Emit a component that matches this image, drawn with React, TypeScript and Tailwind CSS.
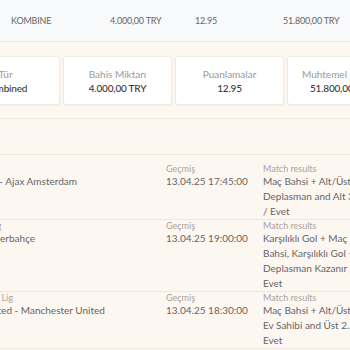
import React from "react";

const bets = [
  {
    id: 1,
    league: "Eredivisie",
    match: "VfL Wolfsburg - Ajax Amsterdam",
    date: "13.04.25 17:45:00",
    pick: "Maç Bahsi + Alt/Üst, Deplasman and Alt 3.5 / Evet",
  },
  {
    id: 2,
    league: "Türkiye Süper Lig",
    match: "Sivasspor - Fenerbahçe",
    date: "13.04.25 19:00:00",
    pick: "Karşılıklı Gol + Maç Bahsi, Karşılıklı Gol + Deplasman Kazanır / Evet",
  },
  {
    id: 3,
    league: "İngiltere Premier Lig",
    match: "Newcastle United - Manchester United",
    date: "13.04.25 18:30:00",
    pick: "Maç Bahsi + Alt/Üst, Ev Sahibi and Üst 2.5 / Evet",
  },
];

const stats = [
  { label: "Tür", value: "Combined" },
  { label: "Bahis Miktarı", value: "4.000,00 TRY" },
  { label: "Puanlamalar", value: "12.95" },
  { label: "Muhtemel Kazanç", value: "51.800,00 TRY" },
];

export default function App() {
  return (
    <div className="w-[350px] h-[350px] overflow-hidden bg-[#fdf7f1] font-['Lato',sans-serif]">
      {/* Summary row */}
      <div className="h-[42px] bg-[#f8f9fb] border-b border-[#e8e6e5] flex items-center text-[9px] text-[#666] tracking-[-0.2px]">
        <span className="ml-[11px] w-[99px]">KOMBINE</span>
        <span className="w-[85px]">4.000,00 TRY</span>
        <span className="w-[88px]">12.95</span>
        <span className="whitespace-nowrap">51.800,00 TRY</span>
      </div>

      {/* Stat cards */}
      <div className="pt-[14px] pb-[13px] border-b border-[#f3e8de]">
        <div className="-ml-[49px] flex gap-[3px]">
          {stats.map((s) => (
            <div
              key={s.label}
              className="w-[109px] h-[49px] shrink-0 bg-white border border-[#f1ebe6] rounded-[3px] shadow-[0_1px_2px_rgba(200,180,160,0.12)] flex flex-col items-center justify-center"
            >
              <span className="text-[10px] leading-[14px] text-[#9a9a9a] whitespace-nowrap">{s.label}</span>
              <span className="text-[10px] leading-[14px] font-medium text-[#3a3a3a] tracking-[-0.2px] whitespace-nowrap">{s.value}</span>
            </div>
          ))}
        </div>
      </div>

      <div className="h-[36px] border-b border-[#f1e6dc]" />

      {/* Bet rows */}
      <div className="pt-[8px]">
        {bets.map((b) => (
          <div key={b.id} className="flex border-b border-[#f1e6dc] -ml-[66px]">
            <div className="w-[232px] shrink-0">
              <p className="text-[9px] leading-[11px] text-[#aaa39d] whitespace-nowrap">{b.league}</p>
              <p className="text-[10px] leading-[15px] text-[#666] whitespace-nowrap">{b.match}</p>
            </div>
            <div className="w-[97px] shrink-0">
              <p className="text-[9px] leading-[11px] text-[#aaa39d]">Geçmiş</p>
              <p className="text-[10px] leading-[15px] text-[#666] whitespace-nowrap">{b.date}</p>
            </div>
            <div className="w-[100px] shrink-0">
              <p className="text-[9px] leading-[11px] text-[#aaa39d]">Match results</p>
              <p className="text-[10px] leading-[15px] text-[#666]">{b.pick}</p>
            </div>
          </div>
        ))}
      </div>
    </div>
  );
}
